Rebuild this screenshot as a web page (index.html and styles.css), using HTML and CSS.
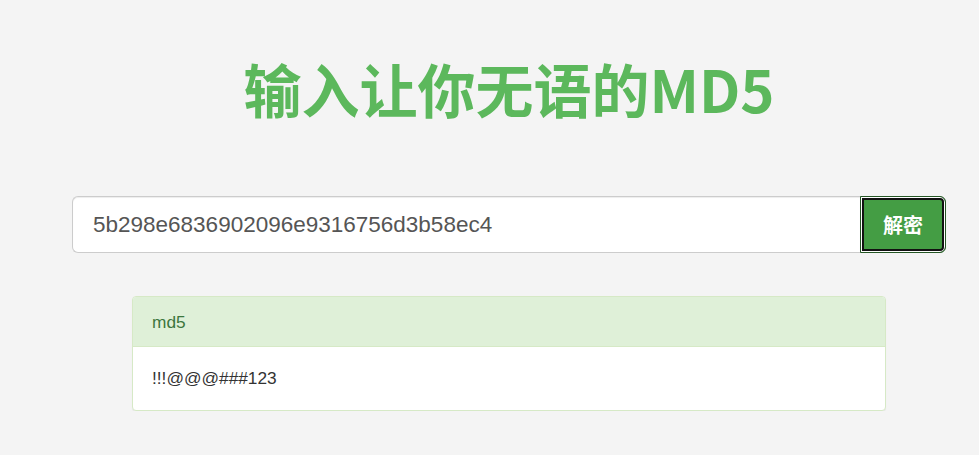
FILE: index.html
```html
<!DOCTYPE html>
<html lang="zh-CN">
<head>
    <meta charset="UTF-8">
    <meta name="viewport" content="width=device-width, initial-scale=1.0">
    <title>输入让你无语的MD5</title>
    <link rel="stylesheet" href="styles.css">
</head>
<body>
    <div class="page">
        <h1 class="title">输入让你无语的MD5</h1>

        <form class="search" onsubmit="return false;">
            <input class="search-input" type="text" value="5b298e6836902096e9316756d3b58ec4">
            <button class="search-btn" type="submit">解密</button>
        </form>

        <div class="panel">
            <div class="panel-heading">md5</div>
            <div class="panel-body">!!!@@@###123</div>
        </div>
    </div>
</body>
</html>
```

FILE: styles.css
```css
body {
    margin: 0;
    background: #f4f4f4;
    font-family: "Liberation Sans", Arial, "Noto Sans CJK SC", sans-serif;
    color: #333;
}
.page {
    padding: 0 33px 0 72px;
    display: flex;
    flex-direction: column;
    align-items: center;
}
.title {
    margin: 48px 0 0;
    height: 148px;
    font-family: "Noto Sans CJK SC", sans-serif;
    font-size: 58px;
    font-weight: 700;
    line-height: 80px;
    color: #5cb85c;
    text-align: center;
}
.search {
    display: flex;
    width: 100%;
    height: 57px;
    margin: 0;
}
.search-input {
    flex: 1;
    box-sizing: border-box;
    height: 57px;
    padding: 0 20px;
    border: 1px solid #ccc;
    border-right: 0;
    border-radius: 6px 0 0 6px;
    background: #fff;
    box-shadow: inset 0 1px 1px rgba(0, 0, 0, 0.075);
    font-family: "Liberation Sans", Arial, sans-serif;
    font-size: 22.5px;
    color: #555;
    outline: none;
}
.search-btn {
    width: 86px;
    height: 57px;
    box-sizing: border-box;
    border: 1px solid #255625;
    border-radius: 0 6px 6px 0;
    background: #449d44;
    box-shadow: inset 0 0 0 1px #fff, inset 0 0 0 3px #111;
    color: #fff;
    font-family: "Noto Sans CJK SC", sans-serif;
    font-size: 20px;
    font-weight: 700;
    cursor: pointer;
}
.panel {
    width: 754px;
    box-sizing: border-box;
    margin-top: 43px;
    border: 1px solid #d6e9c6;
    border-radius: 4px;
    background: #fff;
    box-shadow: 0 1px 1px rgba(0, 0, 0, 0.05);
    font-size: 17.3px;
}
.panel-heading {
    height: 50px;
    box-sizing: border-box;
    padding: 0 19px;
    line-height: 50px;
    background: #dff0d8;
    border-bottom: 1px solid #d6e9c6;
    border-radius: 3px 3px 0 0;
    color: #3c763d;
}
.panel-body {
    padding: 0 19px;
    height: 63px;
    line-height: 63px;
    color: #333;
}
```
